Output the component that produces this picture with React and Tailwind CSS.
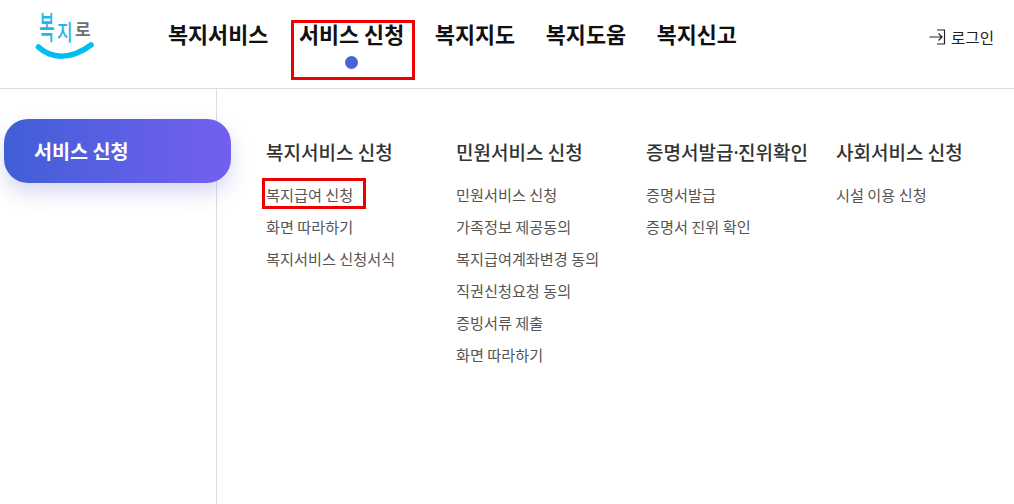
const font = { fontFamily: '"Noto Sans CJK KR", "Noto Sans", sans-serif' };

const nav = ["복지서비스", "서비스 신청", "복지지도", "복지도움", "복지신고"];
const cols = [
  { title: "복지서비스 신청", items: ["복지급여 신청", "화면 따라하기", "복지서비스 신청서식"] },
  { title: "민원서비스 신청", items: ["민원서비스 신청", "가족정보 제공동의", "복지급여계좌변경 동의", "직권신청요청 동의", "증빙서류 제출", "화면 따라하기"] },
  { title: <>증명서발급<span className="font-['Noto_Sans'] tracking-[-0.5px]">·</span>진위확인</>, items: ["증명서발급", "증명서 진위 확인"] },
  { title: "사회서비스 신청", items: ["시설 이용 신청"] },
];

function Logo() {
  return (
    <div className="relative w-[60px] h-[60px] ml-[35px] mt-[8px] shrink-0">
      <span className="absolute left-[4px] top-[8px] text-[#1fb8ea] text-[17px] leading-[20px] font-medium scale-y-[1.9]">복</span>
      <span className="absolute left-[22px] top-[13px] text-[#1fb8ea] text-[17px] leading-[20px] font-medium scale-y-[1.3]">지</span>
      <span className="absolute left-[40px] top-[11px] text-[#6f6f78] text-[17px] leading-[20px] font-bold">로</span>
      <svg className="absolute left-0 top-0" width="60" height="60" viewBox="0 0 60 60" fill="none">
        <path d="M3.5 39 C 16 51, 36 52, 56 37" stroke="#00bdf2" strokeWidth="5.5" strokeLinecap="round" />
      </svg>
    </div>
  );
}

export default function App() {
  return (
    <div style={font} className="w-[1014px] h-[504px] bg-white overflow-hidden flex flex-col">
      <header className="h-[89px] shrink-0 border-b border-[#dddddd] flex items-start">
        <Logo />
        <nav className="flex ml-[73px] pt-[18px] gap-[30.7px] text-[21.8px] font-bold text-[#111] leading-[32px]">
          {nav.map((n, i) => (
            <div key={n} className="relative whitespace-nowrap">
              {n}
              {i === 1 && (
                <>
                  <span className="absolute left-[46px] top-[38px] w-[13px] h-[13px] rounded-full bg-[#4a62d9]" />
                  <span className="absolute left-[-8px] top-[2px] w-[124px] h-[60px] border-[3px] border-[#ee0000]" />
                </>
              )}
            </div>
          ))}
        </nav>
        <div className="ml-auto mr-[20px] mt-[27px] flex items-center gap-[5px] text-[15.6px] leading-[20px] text-[#222]">
          <svg width="17" height="16" viewBox="0 0 17 16" fill="none" stroke="#222" strokeWidth="1.2">
            <path d="M0.5 8 H13 M9.5 4.5 L13 8 L9.5 11.5" />
            <path d="M8 1 H15.5 V15 H8" />
          </svg>
          <span>로그인</span>
        </div>
      </header>
      <div className="flex flex-1">
        <aside className="w-[217px] shrink-0 border-r border-[#dddddd] pt-[30px] pl-[4px]">
          <div className="relative w-[227px] h-[64px] rounded-[24px] bg-gradient-to-r from-[#3f5fd6] to-[#735ff0] shadow-[0_10px_20px_rgba(80,80,200,0.22)] pl-[30px] flex items-center text-white text-[19.6px] font-bold whitespace-nowrap">
            서비스 신청
          </div>
        </aside>
        <main className="flex pl-[49px] pt-[49px]">
          {cols.map((c, ci) => (
            <section key={ci} className="w-[190px] shrink-0">
              <h3 className="h-[28px] text-[19px] leading-[28px] font-medium text-[#333] whitespace-nowrap">{c.title}</h3>
              <ul className="mt-[12px]">
                {c.items.map((it, i) => (
                  <li key={it} className="relative h-[32px] text-[15.2px] leading-[32px] text-[#555] whitespace-nowrap">
                    {it}
                    {ci === 0 && i === 0 && (
                      <span className="absolute left-[-4px] top-[0px] w-[104px] h-[31px] border-[3px] border-[#ee0000]" />
                    )}
                  </li>
                ))}
              </ul>
            </section>
          ))}
        </main>
      </div>
    </div>
  );
}
